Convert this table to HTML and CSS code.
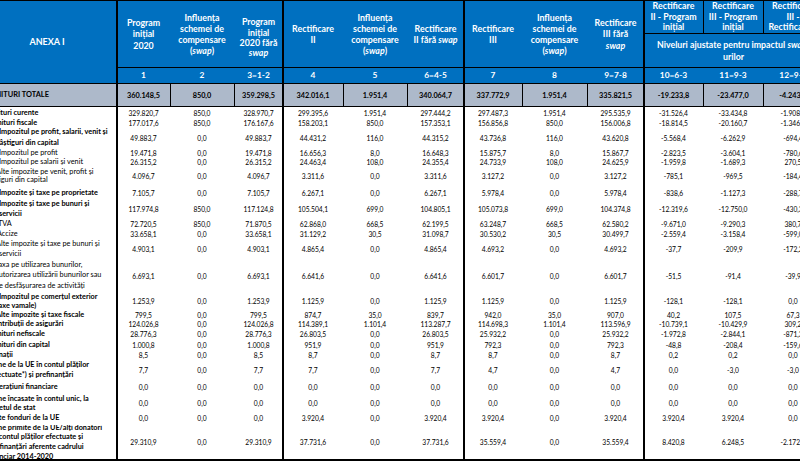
FILE: index.html
```html
<!DOCTYPE html>
<html lang="ro">
<head>
<meta charset="utf-8">
<title>Anexa I</title>
<link rel="stylesheet" href="styles.css">
</head>
<body>
<div class="sheet">
  <div class="head">
    <div class="hc anexa"><span>ANEXA I</span></div>
    <div class="hc tall g"><span>Program<br>inițial<br>2020</span></div>
    <div class="hc tall"><span>Influența<br>schemei de<br>compensare<br>(<i>swap</i>)</span></div>
    <div class="hc tall dn"><span>Program<br>inițial<br>2020 fără<br><i>swap</i></span></div>
    <div class="hc tall g"><span>Rectificare<br>II</span></div>
    <div class="hc tall"><span>Influența<br>schemei de<br>compensare<br>(<i>swap</i>)</span></div>
    <div class="hc tall"><span>Rectificare<br>II fără <i>swap</i></span></div>
    <div class="hc tall g"><span>Rectificare<br>III</span></div>
    <div class="hc tall"><span>Influența<br>schemei de<br>compensare<br>(<i>swap</i>)</span></div>
    <div class="hc tall"><span>Rectificare<br>III fără<br><i>swap</i></span></div>
    <div class="hc top g"><span>Rectificare<br>II - Program<br>inițial</span></div>
    <div class="hc top t"><span>Rectificare<br>III - Program<br>inițial</span></div>
    <div class="hc top t"><span>Rectificare<br>III -<br>Rectificare II</span></div>
    <div class="hc niv g"><span>Niveluri ajustate pentru impactul <i>swap</i>-<br>urilor</span></div>
    <div class="hc num g"><span>1</span></div>
    <div class="hc num"><span>2</span></div>
    <div class="hc num"><span>3=1-2</span></div>
    <div class="hc num g"><span>4</span></div>
    <div class="hc num"><span>5</span></div>
    <div class="hc num"><span>6=4-5</span></div>
    <div class="hc num g"><span>7</span></div>
    <div class="hc num"><span>8</span></div>
    <div class="hc num"><span>9=7-8</span></div>
    <div class="hc num g"><span>10=6-3</span></div>
    <div class="hc num"><span>11=9-3</span></div>
    <div class="hc num"><span>12=9-6</span></div>
  </div>

  <div class="row total">
    <div class="lab"><div class="p9">VENITURI TOTALE</div></div>
    <div class="c g">360.148,5</div><div class="c t">850,0</div><div class="c t">359.298,5</div>
    <div class="c g">342.016,1</div><div class="c t">1.951,4</div><div class="c t">340.064,7</div>
    <div class="c g">337.772,9</div><div class="c t">1.951,4</div><div class="c t">335.821,5</div>
    <div class="c g">-19.233,8</div><div class="c t">-23.477,0</div><div class="c t">-4.243,2</div>
  </div>

  <div class="row h11">
    <div class="lab b"><div class="p9">Venituri curente</div></div>
    <div class="c g">329.820,7</div><div class="c">850,0</div><div class="c">328.970,7</div>
    <div class="c g">299.395,6</div><div class="c">1.951,4</div><div class="c">297.444,2</div>
    <div class="c g">297.487,3</div><div class="c">1.951,4</div><div class="c">295.535,9</div>
    <div class="c g">-31.526,4</div><div class="c">-33.434,8</div><div class="c">-1.908,3</div>
  </div>

  <div class="row h9h">
    <div class="lab b"><div class="p12">Venituri fiscale</div></div>
    <div class="c g">177.017,6</div><div class="c">850,0</div><div class="c">176.167,6</div>
    <div class="c g">158.203,1</div><div class="c">850,0</div><div class="c">157.353,1</div>
    <div class="c g">156.856,8</div><div class="c">850,0</div><div class="c">156.006,8</div>
    <div class="c g">-18.814,5</div><div class="c">-20.160,7</div><div class="c">-1.346,3</div>
  </div>

  <div class="row h20h">
    <div class="lab b l10h"><div class="p22">Impozitul pe profit, salarii, venit și</div><div class="p19">câștiguri din capital</div></div>
    <div class="c g">49.883,7</div><div class="c">0,0</div><div class="c">49.883,7</div>
    <div class="c g">44.431,2</div><div class="c">116,0</div><div class="c">44.315,2</div>
    <div class="c g">43.736,8</div><div class="c">116,0</div><div class="c">43.620,8</div>
    <div class="c g">-5.568,4</div><div class="c">-6.262,9</div><div class="c">-694,4</div>
  </div>

  <div class="row h10">
    <div class="lab"><div class="p22">Impozitul pe profit</div></div>
    <div class="c g">19.471,8</div><div class="c">0,0</div><div class="c">19.471,8</div>
    <div class="c g">16.656,3</div><div class="c">8,0</div><div class="c">16.648,3</div>
    <div class="c g">15.875,7</div><div class="c">8,0</div><div class="c">15.867,7</div>
    <div class="c g">-2.823,5</div><div class="c">-3.604,1</div><div class="c">-780,6</div>
  </div>

  <div class="row h8">
    <div class="lab"><div class="p22">Impozitul pe salarii și venit</div></div>
    <div class="c g">26.315,2</div><div class="c">0,0</div><div class="c">26.315,2</div>
    <div class="c g">24.463,4</div><div class="c">108,0</div><div class="c">24.355,4</div>
    <div class="c g">24.733,9</div><div class="c">108,0</div><div class="c">24.625,9</div>
    <div class="c g">-1.959,8</div><div class="c">-1.689,3</div><div class="c">270,5</div>
  </div>

  <div class="row h20">
    <div class="lab l8h"><div class="p19">Alte impozite pe venit, profit și</div><div class="p9">câștiguri din capital</div></div>
    <div class="c g">4.096,7</div><div class="c">0,0</div><div class="c">4.096,7</div>
    <div class="c g">3.311,6</div><div class="c">0,0</div><div class="c">3.311,6</div>
    <div class="c g">3.127,2</div><div class="c">0,0</div><div class="c">3.127,2</div>
    <div class="c g">-785,1</div><div class="c">-969,5</div><div class="c">-184,4</div>
  </div>

  <div class="row h13">
    <div class="lab b"><div class="p22">Impozite și taxe pe proprietate</div></div>
    <div class="c g">7.105,7</div><div class="c">0,0</div><div class="c">7.105,7</div>
    <div class="c g">6.267,1</div><div class="c">0,0</div><div class="c">6.267,1</div>
    <div class="c g">5.978,4</div><div class="c">0,0</div><div class="c">5.978,4</div>
    <div class="c g">-838,6</div><div class="c">-1.127,3</div><div class="c">-288,7</div>
  </div>

  <div class="row h20">
    <div class="lab b l10h"><div class="p22">Impozite și taxe pe bunuri și</div><div class="p22">servicii</div></div>
    <div class="c g">117.974,8</div><div class="c">850,0</div><div class="c">117.124,8</div>
    <div class="c g">105.504,1</div><div class="c">699,0</div><div class="c">104.805,1</div>
    <div class="c g">105.073,8</div><div class="c">699,0</div><div class="c">104.374,8</div>
    <div class="c g">-12.319,6</div><div class="c">-12.750,0</div><div class="c">-430,3</div>
  </div>

  <div class="row h10">
    <div class="lab"><div class="p21">TVA</div></div>
    <div class="c g">72.720,5</div><div class="c">850,0</div><div class="c">71.870,5</div>
    <div class="c g">62.868,0</div><div class="c">668,5</div><div class="c">62.199,5</div>
    <div class="c g">63.248,7</div><div class="c">668,5</div><div class="c">62.580,2</div>
    <div class="c g">-9.671,0</div><div class="c">-9.290,3</div><div class="c">380,7</div>
  </div>

  <div class="row h10">
    <div class="lab"><div class="p20">Accize</div></div>
    <div class="c g">33.658,1</div><div class="c">0,0</div><div class="c">33.658,1</div>
    <div class="c g">31.129,2</div><div class="c">30,5</div><div class="c">31.098,7</div>
    <div class="c g">30.530,2</div><div class="c">30,5</div><div class="c">30.499,7</div>
    <div class="c g">-2.559,4</div><div class="c">-3.158,4</div><div class="c">-599,0</div>
  </div>

  <div class="row h20">
    <div class="lab l10"><div class="p19">Alte impozite și taxe pe bunuri și</div><div class="p22">servicii</div></div>
    <div class="c g">4.903,1</div><div class="c">0,0</div><div class="c">4.903,1</div>
    <div class="c g">4.865,4</div><div class="c">0,0</div><div class="c">4.865,4</div>
    <div class="c g">4.693,2</div><div class="c">0,0</div><div class="c">4.693,2</div>
    <div class="c g">-37,7</div><div class="c">-209,9</div><div class="c">-172,2</div>
  </div>

  <div class="row h33">
    <div class="lab l10h"><div class="p18">Taxa pe utilizarea bunurilor,</div><div class="p18">autorizarea utilizării bunurilor sau</div><div class="p18">pe desfășurarea de activități</div></div>
    <div class="c g">6.693,1</div><div class="c">0,0</div><div class="c">6.693,1</div>
    <div class="c g">6.641,6</div><div class="c">0,0</div><div class="c">6.641,6</div>
    <div class="c g">6.601,7</div><div class="c">0,0</div><div class="c">6.601,7</div>
    <div class="c g">-51,5</div><div class="c">-91,4</div><div class="c">-39,9</div>
  </div>

  <div class="row h18">
    <div class="lab b l9"><div class="p22">Impozitul pe comerțul exterior</div><div class="p17">(taxe vamale)</div></div>
    <div class="c g">1.253,9</div><div class="c">0,0</div><div class="c">1.253,9</div>
    <div class="c g">1.125,9</div><div class="c">0,0</div><div class="c">1.125,9</div>
    <div class="c g">1.125,9</div><div class="c">0,0</div><div class="c">1.125,9</div>
    <div class="c g">-128,1</div><div class="c">-128,1</div><div class="c">0,0</div>
  </div>

  <div class="row h9h">
    <div class="lab b"><div class="p19">Alte impozite și taxe fiscale</div></div>
    <div class="c g">799,5</div><div class="c">0,0</div><div class="c">799,5</div>
    <div class="c g">874,7</div><div class="c">35,0</div><div class="c">839,7</div>
    <div class="c g">942,0</div><div class="c">35,0</div><div class="c">907,0</div>
    <div class="c g">40,2</div><div class="c">107,5</div><div class="c">67,3</div>
  </div>

  <div class="row h9h">
    <div class="lab b"><div class="p12">Contribuții de asigurări</div></div>
    <div class="c g">124.026,8</div><div class="c">0,0</div><div class="c">124.026,8</div>
    <div class="c g">114.389,1</div><div class="c">1.101,4</div><div class="c">113.287,7</div>
    <div class="c g">114.698,3</div><div class="c">1.101,4</div><div class="c">113.596,9</div>
    <div class="c g">-10.739,1</div><div class="c">-10.429,9</div><div class="c">309,2</div>
  </div>

  <div class="row h10h">
    <div class="lab b"><div class="p12">Venituri nefiscale</div></div>
    <div class="c g">28.776,3</div><div class="c">0,0</div><div class="c">28.776,3</div>
    <div class="c g">26.803,5</div><div class="c">0,0</div><div class="c">26.803,5</div>
    <div class="c g">25.932,2</div><div class="c">0,0</div><div class="c">25.932,2</div>
    <div class="c g">-1.972,8</div><div class="c">-2.844,1</div><div class="c">-871,3</div>
  </div>

  <div class="row h11">
    <div class="lab b"><div class="p12">Venituri din capital</div></div>
    <div class="c g">1.000,8</div><div class="c">0,0</div><div class="c">1.000,8</div>
    <div class="c g">951,9</div><div class="c">0,0</div><div class="c">951,9</div>
    <div class="c g">792,3</div><div class="c">0,0</div><div class="c">792,3</div>
    <div class="c g">-48,8</div><div class="c">-208,4</div><div class="c">-159,6</div>
  </div>

  <div class="row h9h">
    <div class="lab b"><div class="p12">Donații</div></div>
    <div class="c g">8,5</div><div class="c">0,0</div><div class="c">8,5</div>
    <div class="c g">8,7</div><div class="c">0,0</div><div class="c">8,7</div>
    <div class="c g">8,7</div><div class="c">0,0</div><div class="c">8,7</div>
    <div class="c g">0,2</div><div class="c">0,2</div><div class="c">0,0</div>
  </div>

  <div class="row h20">
    <div class="lab b l9h"><div class="p11">Sume de la UE în contul plăților</div><div class="p14">efectuate*) și prefinanțări</div></div>
    <div class="c g">7,7</div><div class="c">0,0</div><div class="c">7,7</div>
    <div class="c g">7,7</div><div class="c">0,0</div><div class="c">7,7</div>
    <div class="c g">4,7</div><div class="c">0,0</div><div class="c">4,7</div>
    <div class="c g">0,0</div><div class="c">-3,0</div><div class="c">-3,0</div>
  </div>

  <div class="row h14">
    <div class="lab b"><div class="p12">Operațiuni financiare</div></div>
    <div class="c g">0,0</div><div class="c">0,0</div><div class="c">0,0</div>
    <div class="c g">0,0</div><div class="c">0,0</div><div class="c">0,0</div>
    <div class="c g">0,0</div><div class="c">0,0</div><div class="c">0,0</div>
    <div class="c g">0,0</div><div class="c">0,0</div><div class="c">0,0</div>
  </div>

  <div class="row h17">
    <div class="lab b l9"><div class="p11">Sume încasate în contul unic, la</div><div class="p10">bugetul de stat</div></div>
    <div class="c g">0,0</div><div class="c">0,0</div><div class="c">0,0</div>
    <div class="c g">0,0</div><div class="c">0,0</div><div class="c">0,0</div>
    <div class="c g">0,0</div><div class="c">0,0</div><div class="c">0,0</div>
    <div class="c g">0,0</div><div class="c">0,0</div><div class="c">0,0</div>
  </div>

  <div class="row h14">
    <div class="lab b"><div class="p15">Alte fonduri de la UE</div></div>
    <div class="c g">0,0</div><div class="c">0,0</div><div class="c">0,0</div>
    <div class="c g">3.920,4</div><div class="c">0,0</div><div class="c">3.920,4</div>
    <div class="c g">3.920,4</div><div class="c">0,0</div><div class="c">3.920,4</div>
    <div class="c g">3.920,4</div><div class="c">3.920,4</div><div class="c">0,0</div>
  </div>

  <div class="row last">
    <div class="lab b l9h"><div class="p11">Sume primite de la UE/alți donatori</div><div class="p14">în contul plăților efectuate și</div><div class="p12">prefinanțări aferente cadrului</div><div class="p10">financiar 2014-2020</div></div>
    <div class="c g">29.310,9</div><div class="c">0,0</div><div class="c">29.310,9</div>
    <div class="c g">37.731,6</div><div class="c">0,0</div><div class="c">37.731,6</div>
    <div class="c g">35.559,4</div><div class="c">0,0</div><div class="c">35.559,4</div>
    <div class="c g">8.420,8</div><div class="c">6.248,5</div><div class="c">-2.172,2</div>
  </div>
</div>
</body>
</html>
```

FILE: styles.css
```css
* {
  box-sizing: border-box;
  margin: 0;
  padding: 0;
}

html,
body {
  width: 800px;
  height: 462px;
  overflow: hidden;
  background: #ffffff;
}

body {
  font-family: Lato, "Liberation Sans", sans-serif;
  color: #000000;
}

.sheet {
  width: 846px;
  margin-left: -23px;
}

.head,
.row {
  display: grid;
  grid-template-columns: 140px 53px 64px 49px 60px 64px 57px 58px 65px 57px 59px 60px 60px;
}

/* ---------- header ---------- */
.head {
  grid-template-rows: 32px 34px 16px;
  background: #0070c0;
  color: #ffffff;
  font-weight: 700;
  border-top: 1px solid #000000;
}

.hc {
  display: flex;
  align-items: center;
  justify-content: center;
  text-align: center;
  font-size: 8.8px;
  line-height: 11.2px;
  white-space: nowrap;
}

.hc i {
  font-style: italic;
}

.anexa {
  grid-row: 1 / 4;
  font-size: 9px;
}

.tall {
  grid-row: 1 / 3;
}

.dn {
  padding-top: 8px;
  line-height: 10.4px;
}

.top {
  grid-row: 1;
  line-height: 10.8px;
}

.niv {
  grid-row: 2;
  grid-column: 11 / 14;
  border-top: 1px solid #000000;
  line-height: 11.6px;
}

.num {
  grid-row: 3;
  border-top: 1px solid #000000;
  font-size: 8.4px;
}

/* ---------- lines ---------- */
.g {
  box-shadow: -1px 0 0 #000000, inset 1px 0 0 #000000;
}

.t {
  box-shadow: inset 1px 0 0 #000000;
}

/* ---------- body rows ---------- */
.row {
  font-size: 6.7px;
}

.c {
  display: flex;
  align-items: center;
  justify-content: center;
  white-space: nowrap;
}

.lab {
  display: flex;
  flex-direction: column;
  justify-content: center;
  align-items: flex-start;
  overflow: hidden;
  white-space: nowrap;
  font-size: 7.3px;
  line-height: 10px;
}

.b {
  font-weight: 700;
}

.total {
  height: 24px;
  background: #adb9ca;
  border-top: 1px solid #000000;
  border-bottom: 1px solid #000000;
  font-weight: 700;
  font-size: 7.3px;
}

.total .lab {
  font-size: 7.4px;
}

.last {
  height: 36px;
  border-bottom: 2px solid #000000;
}

.h8 { height: 8px; }
.h9h { height: 9.5px; }
.h10 { height: 10px; }
.h10h { height: 10.5px; }
.h11 { height: 11px; }
.h13 { height: 13px; }
.h14 { height: 14px; }
.h17 { height: 17px; }
.h18 { height: 18px; }
.h20 { height: 20px; }
.h20h { height: 20.5px; }
.h33 { height: 33px; }

.l8h { line-height: 8.5px; }
.l9 { line-height: 9px; }
.l9h { line-height: 9.6px; }
.l10 { line-height: 10px; }
.l10h { line-height: 10.5px; }

.p9 { padding-left: 9px; }
.p10 { padding-left: 10px; }
.p11 { padding-left: 11px; }
.p12 { padding-left: 12px; }
.p14 { padding-left: 14px; }
.p15 { padding-left: 15px; }
.p17 { padding-left: 17px; }
.p18 { padding-left: 18px; }
.p19 { padding-left: 19px; }
.p20 { padding-left: 20px; }
.p21 { padding-left: 21px; }
.p22 { padding-left: 22px; }
```
